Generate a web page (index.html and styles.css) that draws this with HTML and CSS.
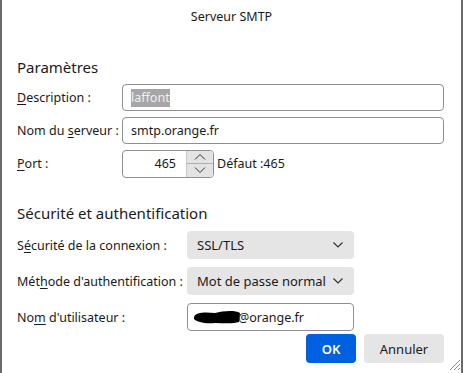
FILE: index.html
```html
<!DOCTYPE html>
<html lang="fr">
<head>
    <meta charset="UTF-8">
    <title>Serveur SMTP</title>
    <link rel="stylesheet" href="styles.css">
</head>
<body>
    <div class="dialog">
        <div class="title">Serveur SMTP</div>

        <h2 class="section first">Paramètres</h2>
        <div class="row">
            <label class="label"><u>D</u>escription :</label>
            <div class="field wide"><span class="selected">laffont</span></div>
        </div>
        <div class="row">
            <label class="label">Nom du <u>s</u>erveur :</label>
            <div class="field wide">smtp.orange.fr</div>
        </div>
        <div class="row">
            <label class="label"><u>P</u>ort :</label>
            <div class="field port">
                <span class="port-value">465</span>
                <div class="spinner">
                    <div class="spin-btn">
                        <svg width="12" height="8" viewBox="0 0 12 8"><path d="M1 6.5 L6 1.5 L11 6.5" fill="none" stroke="#333" stroke-width="1"/></svg>
                    </div>
                    <div class="spin-btn">
                        <svg width="12" height="8" viewBox="0 0 12 8"><path d="M1 1.5 L6 6.5 L11 1.5" fill="none" stroke="#333" stroke-width="1"/></svg>
                    </div>
                </div>
            </div>
            <span class="default">Défaut :465</span>
        </div>

        <h2 class="section second">Sécurité et authentification</h2>
        <div class="row sec">
            <label class="label long">S<u>é</u>curité de la connexion :</label>
            <div class="select">
                <span>SSL/TLS</span>
                <svg width="12" height="8" viewBox="0 0 12 8"><path d="M1.5 1.5 L6 6 L10.5 1.5" fill="none" stroke="#333" stroke-width="1.2"/></svg>
            </div>
        </div>
        <div class="row sec">
            <label class="label long">Mét<u>h</u>ode d'authentification :</label>
            <div class="select">
                <span>Mot de passe normal</span>
                <svg width="12" height="8" viewBox="0 0 12 8"><path d="M1.5 1.5 L6 6 L10.5 1.5" fill="none" stroke="#333" stroke-width="1.2"/></svg>
            </div>
        </div>
        <div class="row sec">
            <label class="label long">No<u>m</u> d'utilisateur :</label>
            <div class="field user">
                <svg class="redact" width="48" height="16" viewBox="0 0 48 16"><path d="M1 8 C3 3 12 3 22 4 C30 2 42 1 47 4 L46 13 C40 15 30 14 22 14 C12 15 4 13 1 10 Z" fill="#000"/></svg>
                <span>@orange.fr</span>
            </div>
        </div>

        <div class="buttons">
            <button class="btn primary">OK</button>
            <button class="btn">Annuler</button>
        </div>

        <svg class="grip" width="14" height="14" viewBox="0 0 14 14">
            <path d="M13 3 L3 13 M13 7 L7 13 M13 11 L11 13" stroke="#8a8a8a" stroke-width="1"/>
        </svg>
    </div>
</body>
</html>
```

FILE: styles.css
```css
body {
    margin: 0;
    font-family: "Noto Sans", "DejaVu Sans", sans-serif;
    font-size: 12.5px;
    color: #1a1a1a;
    background-color: #ffffff;
}

.dialog {
    position: relative;
    width: 459px;
    height: 373px;
    border-left: 2px solid #6b6b6b;
    border-right: 2px solid #6b6b6b;
    background-color: #ffffff;
    box-sizing: content-box;
    overflow: hidden;
}

.title {
    text-align: center;
    padding-top: 8px;
    height: 18px;
    line-height: 18px;
    font-size: 12.5px;
}

.section {
    margin: 0;
    padding-left: 15px;
    font-size: 15px;
    font-weight: normal;
    line-height: 20px;
}

.section.first {
    margin-top: 31px;
    margin-bottom: 7px;
}

.section.second {
    margin-top: 26px;
    margin-bottom: 8px;
}

.row {
    display: flex;
    align-items: center;
    padding-left: 15px;
    height: 27px;
    margin-bottom: 6px;
}

.row.sec {
    height: 28px;
    margin-bottom: 8px;
}

.label {
    width: 105px;
    flex-shrink: 0;
}

.label.long {
    width: 170px;
}

.label u {
    text-decoration-thickness: 1px;
    text-underline-offset: 2px;
}

.field {
    box-sizing: border-box;
    height: 27px;
    border: 1px solid #8f8f8f;
    border-radius: 4px;
    display: flex;
    align-items: center;
    padding-left: 8px;
    background-color: #ffffff;
}

.field.wide {
    width: 322px;
}

.selected {
    background-color: #a6a6a6;
    color: #f0f0f0;
    line-height: 18px;
}

.field.port {
    width: 92px;
    height: 28px;
    padding-left: 0;
    overflow: hidden;
}

.port-value {
    flex: 1;
    text-align: right;
    padding-right: 10px;
}

.spinner {
    width: 26px;
    height: 100%;
    display: flex;
    flex-direction: column;
    border-left: 1px solid #c8c8c8;
}

.spin-btn {
    flex: 1;
    background-color: #e3e3e3;
    display: flex;
    align-items: center;
    justify-content: center;
}

.spin-btn + .spin-btn {
    border-top: 1px solid #b0b0b0;
}

.default {
    margin-left: 3px;
}

.select {
    box-sizing: border-box;
    width: 167px;
    height: 28px;
    border-radius: 4px;
    background-color: #e5e5e5;
    display: flex;
    align-items: center;
    justify-content: space-between;
    padding: 0 10px 0 10px;
    font-size: 13px;
}

.field.user {
    width: 167px;
    height: 28px;
    padding-left: 5px;
}

.redact {
    display: block;
    margin-right: -3px;
}

.buttons {
    display: flex;
    justify-content: flex-end;
    gap: 8px;
    padding-right: 17px;
    margin-top: -5px;
}

.btn {
    height: 29px;
    border: none;
    border-radius: 4px;
    background-color: #e5e5e5;
    color: #1a1a1a;
    font-family: "Noto Sans", "DejaVu Sans", sans-serif;
    font-size: 13px;
    padding: 0 14px;
    width: 80px;
}

.btn.primary {
    background-color: #0061e0;
    color: #ffffff;
    font-weight: 600;
    width: 50px;
    padding: 0;
}

.grip {
    position: absolute;
    right: 0;
    bottom: 2px;
}
```
